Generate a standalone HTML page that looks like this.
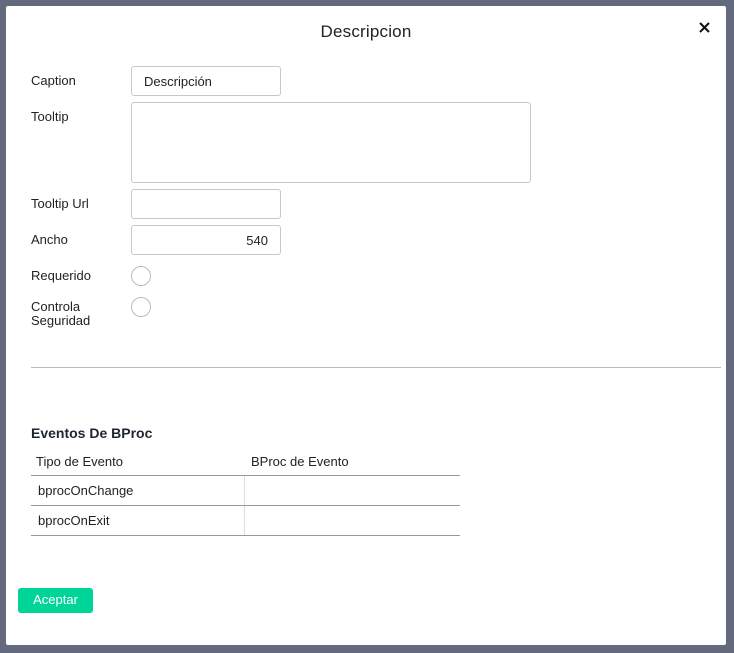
<!DOCTYPE html>
<html><head><meta charset="utf-8"><style>
*{box-sizing:border-box;margin:0;padding:0}
body{width:734px;height:653px;background:#646a7d;font-family:"Liberation Sans",sans-serif;color:#222;position:relative;overflow:hidden}
.m{position:absolute;left:6px;top:6px;width:720px;height:639px;background:#fff;border-radius:2px}
.t{position:absolute;top:16px;left:0;width:100%;text-align:center;font-size:17px;color:#222;letter-spacing:.2px}
.x{position:absolute;left:693px;top:16px}
.l{position:absolute;left:25px;font-size:13px;color:#222;line-height:14px}
.i{position:absolute;left:125px;border:1px solid #c8c8c8;border-radius:3px;background:#fff;font-size:13px;padding:7px 12px}
.r{position:absolute;left:125px;width:20px;height:20px;border:1px solid #bbb;border-radius:50%}
.hr{position:absolute;left:25px;width:690px;top:361px;border-top:1px solid #bbb}
.h{position:absolute;left:25px;top:419px;font-size:14px;font-weight:bold;color:#1e2433}
.tb{position:absolute;left:25px;top:444px;width:429px;font-size:13px}
.row{height:30px;border-bottom:1px solid #999;display:flex}
.row div{line-height:30px}
.hd{height:26px}
.hd div{line-height:24px}
.c1{width:214px;padding-left:7px;border-right:1px solid #ddd}
.c2{padding-left:6px}
.b{position:absolute;left:12px;top:582px;width:75px;height:25px;background:#00d497;border-radius:3px;color:#fff;font-size:13px;text-align:center;line-height:24px}
</style></head><body>
<div class="m">
<div class="t">Descripcion</div>
<svg class="x" width="11" height="11" viewBox="0 0 11 11"><path d="M1 1L10 10M10 1L1 10" stroke="#111" stroke-width="2"/></svg>
<div class="l" style="top:68px">Caption</div>
<div class="i" style="top:60px;width:150px;height:30px">Descripción</div>
<div class="l" style="top:104px">Tooltip</div>
<div class="i" style="top:96px;width:400px;height:81px"></div>
<div class="l" style="top:191px">Tooltip Url</div>
<div class="i" style="top:183px;width:150px;height:30px"></div>
<div class="l" style="top:227px">Ancho</div>
<div class="i" style="top:219px;width:150px;height:30px;text-align:right">540</div>
<div class="l" style="top:263px">Requerido</div>
<div class="r" style="top:260px"></div>
<div class="l" style="top:294px">Controla<br>Seguridad</div>
<div class="r" style="top:291px"></div>
<div class="hr"></div>
<div class="h">Eventos De BProc</div>
<div class="tb">
<div class="row hd"><div class="c1" style="padding-left:5px;border-right:none">Tipo de Evento</div><div class="c2">BProc de Evento</div></div>
<div class="row"><div class="c1">bprocOnChange</div><div class="c2"></div></div>
<div class="row"><div class="c1">bprocOnExit</div><div class="c2"></div></div>
</div>
<div class="b">Aceptar</div>
</div>
</body></html>
